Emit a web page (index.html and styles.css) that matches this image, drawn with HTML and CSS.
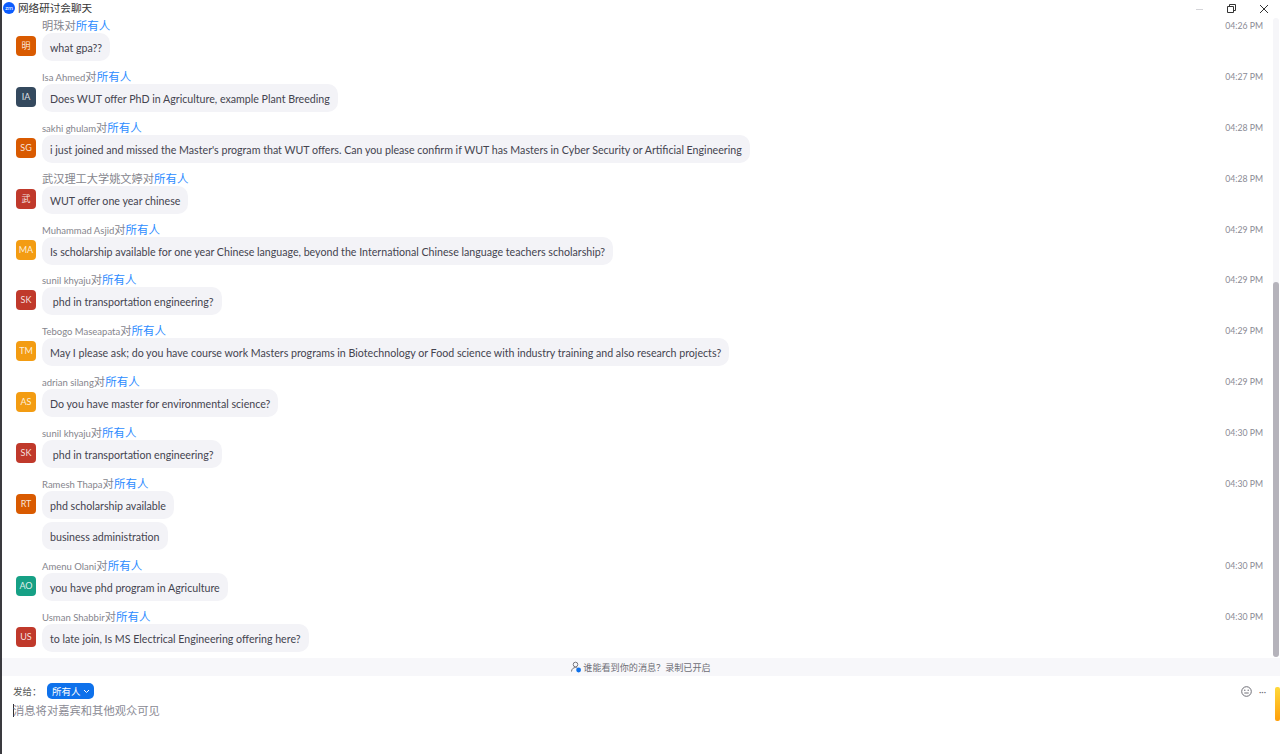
FILE: index.html
```html
<!DOCTYPE html>
<html lang="zh-CN">
<head>
    <meta charset="UTF-8">
    <meta name="viewport" content="width=device-width, initial-scale=1.0">
    <title>网络研讨会聊天</title>
    <link rel="stylesheet" href="styles.css">
</head>
<body>
    <div class="window">
        <header class="titlebar">
            <span class="logo">zm</span>
            <span class="title">网络研讨会聊天</span>
            <div class="controls">
                <svg class="ctl" width="12" height="12" viewBox="0 0 12 12"><path d="M2 6.5h7" stroke="#d4d4d8" fill="none"/></svg>
                <svg class="ctl" width="12" height="12" viewBox="0 0 12 12"><path d="M1.5 3.5h6v6h-6zM3.5 3.5v-2h6v6h-2" stroke="#333" fill="none"/></svg>
                <svg class="ctl" width="12" height="12" viewBox="0 0 12 12"><path d="M2 2l8 8M10 2l-8 8" stroke="#333" fill="none"/></svg>
            </div>
        </header>

        <main class="messages">
            <div class="msg">
                <div class="avatar orange">明</div>
                <div class="body">
                    <div class="meta cjk-name">明珠<span class="to">对</span><span class="all">所有人</span></div>
                    <div class="bubble">what gpa??</div>
                </div>
                <time class="time">04:26 PM</time>
            </div>
            <div class="msg">
                <div class="avatar slate">IA</div>
                <div class="body">
                    <div class="meta">Isa Ahmed<span class="to">对</span><span class="all">所有人</span></div>
                    <div class="bubble">Does WUT offer PhD in Agriculture, example Plant Breeding</div>
                </div>
                <time class="time">04:27 PM</time>
            </div>
            <div class="msg">
                <div class="avatar orange">SG</div>
                <div class="body">
                    <div class="meta">sakhi ghulam<span class="to">对</span><span class="all">所有人</span></div>
                    <div class="bubble">i just joined and missed the Master's program that WUT offers. Can you please confirm if WUT has Masters in Cyber Security or Artificial Engineering</div>
                </div>
                <time class="time">04:28 PM</time>
            </div>
            <div class="msg">
                <div class="avatar red">武</div>
                <div class="body">
                    <div class="meta cjk-name">武汉理工大学姚文婷<span class="to">对</span><span class="all">所有人</span></div>
                    <div class="bubble">WUT offer one year chinese</div>
                </div>
                <time class="time">04:28 PM</time>
            </div>
            <div class="msg">
                <div class="avatar amber">MA</div>
                <div class="body">
                    <div class="meta">Muhammad Asjid<span class="to">对</span><span class="all">所有人</span></div>
                    <div class="bubble">Is scholarship available for one year Chinese language, beyond the International Chinese language teachers scholarship?</div>
                </div>
                <time class="time">04:29 PM</time>
            </div>
            <div class="msg">
                <div class="avatar red">SK</div>
                <div class="body">
                    <div class="meta">sunil khyaju<span class="to">对</span><span class="all">所有人</span></div>
                    <div class="bubble">&nbsp;phd in transportation engineering?</div>
                </div>
                <time class="time">04:29 PM</time>
            </div>
            <div class="msg">
                <div class="avatar amber">TM</div>
                <div class="body">
                    <div class="meta">Tebogo Maseapata<span class="to">对</span><span class="all">所有人</span></div>
                    <div class="bubble">May I please ask; do you have course work Masters programs in Biotechnology or Food science with industry training and also research projects?</div>
                </div>
                <time class="time">04:29 PM</time>
            </div>
            <div class="msg">
                <div class="avatar amber">AS</div>
                <div class="body">
                    <div class="meta">adrian silang<span class="to">对</span><span class="all">所有人</span></div>
                    <div class="bubble">Do you have master for environmental science?</div>
                </div>
                <time class="time">04:29 PM</time>
            </div>
            <div class="msg">
                <div class="avatar red">SK</div>
                <div class="body">
                    <div class="meta">sunil khyaju<span class="to">对</span><span class="all">所有人</span></div>
                    <div class="bubble">&nbsp;phd in transportation engineering?</div>
                </div>
                <time class="time">04:30 PM</time>
            </div>
            <div class="msg">
                <div class="avatar orange">RT</div>
                <div class="body">
                    <div class="meta">Ramesh Thapa<span class="to">对</span><span class="all">所有人</span></div>
                    <div class="bubble">phd scholarship available</div>
                    <div class="bubble">business administration</div>
                </div>
                <time class="time">04:30 PM</time>
            </div>
            <div class="msg">
                <div class="avatar green">AO</div>
                <div class="body">
                    <div class="meta">Amenu Olani<span class="to">对</span><span class="all">所有人</span></div>
                    <div class="bubble">you have phd program in Agriculture</div>
                </div>
                <time class="time">04:30 PM</time>
            </div>
            <div class="msg">
                <div class="avatar red">US</div>
                <div class="body">
                    <div class="meta">Usman Shabbir<span class="to">对</span><span class="all">所有人</span></div>
                    <div class="bubble">to late join, Is MS Electrical Engineering offering here?</div>
                </div>
                <time class="time">04:30 PM</time>
            </div>
        </main>

        <div class="notice">
            <svg width="12" height="12" viewBox="0 0 12 12"><circle cx="4.5" cy="3.5" r="2.3" stroke="#77777f" fill="none"/><path d="M.5 10.5c0-2.5 2-4 4-4 .8 0 1.3.2 1.8.5" stroke="#77777f" fill="none"/><circle cx="7.6" cy="9" r="2.4" fill="#0e71eb"/></svg>
            <span>谁能看到你的消息？录制已开启</span>
        </div>

        <footer class="composer">
            <div class="send-row">
                <span class="send-label">发给：</span>
                <button class="to-btn">所有人<svg width="7" height="5" viewBox="0 0 7 5"><path d="M1 1l2.5 2.5L6 1" stroke="#fff" fill="none"/></svg></button>
                <div class="tools">
                    <svg width="11" height="11" viewBox="0 0 11 11"><circle cx="5.5" cy="5.5" r="4.8" stroke="#6e6e76" fill="none"/><circle cx="3.8" cy="4.3" r=".7" fill="#6e6e76"/><circle cx="7.2" cy="4.3" r=".7" fill="#6e6e76"/><path d="M3.3 7h4.4" stroke="#6e6e76" fill="none"/></svg>
                    <span class="more">···</span>
                </div>
            </div>
            <div class="input"><span class="caret"></span>消息将对嘉宾和其他观众可见</div>
        </footer>

        <div class="scroll-track"><div class="scroll-thumb"></div></div>
        <div class="rec-bar"></div>
    </div>
</body>
</html>
```

FILE: styles.css
```css
* {
    margin: 0;
    padding: 0;
    box-sizing: border-box;
}

body {
    background: #fff;
    color: #232333;
    font-family: 'Lato', 'Noto Sans CJK SC', sans-serif;
    overflow: hidden;
}

.window {
    position: relative;
    display: flex;
    flex-direction: column;
    height: 754px;
    border-left: 2px solid #3a3a3f;
    overflow: hidden;
}

/* title bar */
.titlebar {
    display: flex;
    align-items: center;
    height: 18px;
    flex-shrink: 0;
}

.logo {
    width: 12px;
    height: 12px;
    margin-left: 1px;
    margin-right: 3px;
    margin-top: -2px;
    border-radius: 50%;
    background: #0b5cff;
    color: #fff;
    font-size: 6px;
    line-height: 12px;
    text-align: center;
}

.title {
    font-size: 10.6px;
    font-family: 'Noto Sans CJK SC', sans-serif;
    line-height: 16px;
    margin-top: -2px;
    color: #333;
}

.controls {
    display: flex;
    gap: 20px;
    margin-left: auto;
    margin-right: 10px;
}

/* messages */
.messages {
    flex: 1;
    min-height: 0;
    overflow: hidden;
    padding-right: 17px;
}

.msg {
    display: flex;
    padding-left: 14px;
    margin-bottom: 7.9px;
}

.avatar {
    width: 20px;
    height: 20px;
    margin-top: 18px;
    margin-right: 6px;
    flex-shrink: 0;
    border-radius: 4px;
    color: rgba(255, 255, 255, 0.85);
    font-size: 9px;
    line-height: 20px;
    text-align: center;
}

.orange { background: #d95a00; }
.slate { background: #34495e; }
.red { background: #c0392b; }
.amber { background: #f39c12; }
.green { background: #16a085; }

.body {
    flex: 1;
    min-width: 0;
}

.meta {
    height: 15px;
    font-size: 9.5px;
    line-height: 15px;
    color: #85858d;
    white-space: nowrap;
}

.cjk-name { font-size: 11.2px; }

.to {
    font-size: 11.3px;
    font-family: 'Noto Sans CJK SC', sans-serif;
}

.all {
    font-size: 11.5px;
    font-family: 'Noto Sans CJK SC', sans-serif;
    color: #2d8cff;
}

.bubble {
    width: fit-content;
    height: 28px;
    padding: 1px 8px 0;
    border-radius: 10px;
    background: #f3f3f7;
    font-size: 10.65px;
    line-height: 28px;
    color: #44444f;
    white-space: nowrap;
}

.bubble + .bubble { margin-top: 3.3px; }

.time {
    height: 15px;
    font-size: 8.7px;
    line-height: 15px;
    color: #8a8a94;
    white-space: nowrap;
}

/* bottom part */
.notice {
    display: flex;
    align-items: center;
    justify-content: center;
    height: 18px;
    padding-bottom: 1px;
    flex-shrink: 0;
    background: #f7f7fa;
    font-size: 9.1px;
    font-family: 'Noto Sans CJK SC', sans-serif;
    color: #6e6e76;
}

.composer {
    height: 78px;
    flex-shrink: 0;
    padding: 7px 14px 0 11px;
}

.send-row {
    display: flex;
    align-items: center;
    height: 16px;
}

.send-label {
    width: 34px;
    font-size: 9.5px;
    font-family: 'Noto Sans CJK SC', sans-serif;
    color: #555;
}

.to-btn {
    display: flex;
    align-items: center;
    gap: 2px;
    height: 16px;
    padding: 0 4px 0 5px;
    border: none;
    border-radius: 5px;
    background: #0e71eb;
    color: #fff;
    font-size: 9.5px;
    font-family: 'Noto Sans CJK SC', sans-serif;
}

.tools {
    display: flex;
    align-items: center;
    gap: 7px;
    margin-left: auto;
}

.more {
    font-size: 9px;
    color: #6e6e76;
}

.input {
    margin-top: 3px;
    font-size: 11.3px;
    font-family: 'Noto Sans CJK SC', sans-serif;
    line-height: 16px;
    color: #8a8a94;
}

.caret {
    display: inline-block;
    width: 1px;
    height: 13px;
    margin-right: -1px;
    background: #333;
    vertical-align: -2px;
}

/* overlays on the right edge */
.scroll-track {
    position: absolute;
    top: 18px;
    right: 1px;
    width: 6px;
    height: 639px;
    border-radius: 3px;
    background: #f6f6f9;
}

.scroll-thumb {
    position: absolute;
    top: 264px;
    bottom: 0;
    width: 100%;
    border-radius: 3px;
    background: #b5b3bb;
}

.rec-bar {
    position: absolute;
    top: 687px;
    right: 0;
    width: 5px;
    height: 34px;
    border-radius: 2px;
    background: linear-gradient(#ffd93b, #ff9f0a);
}
```
